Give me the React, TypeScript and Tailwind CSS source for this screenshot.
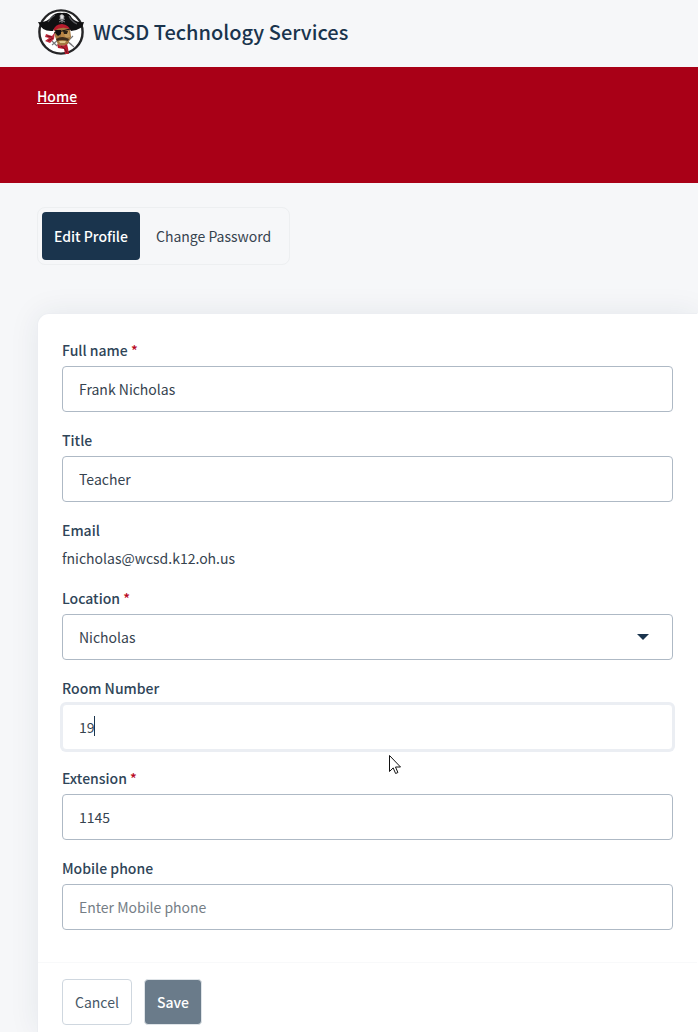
import type { ReactNode } from "react";

const inputClasses =
  "h-[46px] w-full rounded border border-[#aeb9c5] bg-white px-4 text-[14px] text-[#36434f] placeholder:text-[#757e86] focus:border-[#ebeef3] focus:outline-none focus:ring-2 focus:ring-[#ebeef3]";

function Label({ htmlFor, required, children }: { htmlFor: string; required?: boolean; children: ReactNode }) {
  return (
    <label htmlFor={htmlFor} className="text-[14px] leading-6 font-medium text-[#2f4558]">
      {children}
      {required && <span className="text-[#b8071c]"> *</span>}
    </label>
  );
}

type TextFieldProps = {
  id: string;
  label: string;
  value?: string;
  placeholder?: string;
  required?: boolean;
  active?: boolean;
};

function TextField({ id, label, value, placeholder, required, active }: TextFieldProps) {
  return (
    <div className="flex flex-col gap-1">
      <Label htmlFor={id} required={required}>
        {label}
      </Label>
      <div className="relative">
        <input
          id={id}
          type="text"
          defaultValue={value}
          placeholder={placeholder}
          autoFocus={active}
          className={`${inputClasses} ${active ? "caret-transparent" : ""}`}
        />
        {active && <span className="pointer-events-none absolute top-3 left-8 h-5 w-px bg-[#1a344d]" />}
      </div>
    </div>
  );
}

function PirateLogo() {
  return (
    <svg viewBox="0 0 48 48" className="size-12 shrink-0" aria-hidden="true">
      <circle cx="24" cy="24" r="21.6" fill="#fff" stroke="#252527" strokeWidth="2.4" />
      {/* crossed swords */}
      <path d="M15 33 L20 38 M36 28 L29 35 M15 37 L21 32 M35 37 L29 32 M31 34 L37 39" stroke="#77777a" strokeWidth="1.1" />
      {/* face */}
      <path d="M18 21 Q25 17 33 21 L34 29 Q32 33 31 36 Q26 39 21 37 L19 31 Q17 27 18 21Z" fill="#a37840" />
      <path d="M27 23 L32 23 L33 29 L27 30Z" fill="#c49a5b" />
      <path d="M24 24 L27 24 L28 29 L24 29Z" fill="#b98443" />
      <path d="M19 31 Q25 27 32 31 L31 33 Q25 31 20 33Z" fill="#3e2c1c" />
      <path d="M22 33 L29 33 L28 35 L23 35Z" fill="#dec58a" />
      {/* bandana */}
      <path d="M17 23 Q15 18 19 16 Q25 14 32 16 Q35 19 34 22 Q25 17 17 23Z" fill="#b51c2d" />
      <path d="M18 24 L15 28 L9 26 L8 29 L12 30 L8 33 L13 35 L17 31Z" fill="#c02a3c" />
      <path d="M10 28 L15 29 M11 33 L16 30" stroke="#711422" strokeWidth="1" />
      <path d="M20 36 Q25 39 30 36 L31 40 L32 46 L28 46 L27 41 L21 40Z" fill="#b51c2d" />
      <path d="M24 38 L28 41 L30 45" stroke="#6b1421" strokeWidth="1" fill="none" />
      {/* eye patch */}
      <path d="M17 25 L33 21" stroke="#111" strokeWidth="1" />
      <path d="M18 22 L24 22 L24 26 L21 28 L19 26Z" fill="#111" />
      <path d="M26 23 L31 23 L30 26 L27 26Z" fill="#292016" />
      {/* hat */}
      <path d="M1 14 Q10 15 14 9 Q19 4 25 5 Q32 4 35 10 Q39 15 47 14 Q46 22 34 23 Q32 17 25 16 Q18 16 16 23 Q5 24 1 14Z" fill="#101012" />
      <path d="M11 14 Q14 9 18 7 M32 8 Q34 13 40 16" stroke="#57585c" strokeWidth="1.2" fill="none" />
      <path d="M23 7.5 L25 6.5 L27 8 L26.5 11 L23.5 11Z M25 11 V15 M22 11 L28 14 M28 11 L22 14" fill="#dedee0" stroke="#a5a5a8" strokeWidth=".8" />
    </svg>
  );
}

export default function App() {
  return (
    <div className="relative flex min-h-screen flex-col bg-[#f6f7f9] font-['Noto_Sans_CJK_SC',sans-serif] text-[14px] leading-6 text-[#36434f]">
      <header className="flex h-[67px] items-center gap-2 pb-1 pl-[37px]">
        <PirateLogo />
        <span className="text-[20px] leading-7 font-medium text-[#1a344d]">WCSD Technology Services</span>
      </header>

      <nav aria-label="Breadcrumb" className="h-[116px] bg-[#a90017] px-[37px] pt-[17px]">
        <a href="#home" className="font-medium text-white underline">
          Home
        </a>
      </nav>

      <main className="flex flex-1 flex-col pt-6 pl-[37px]">
        <div className="flex gap-0.5 self-start rounded-lg border border-[#edeff1] p-1">
          <button type="button" className="h-12 rounded bg-[#1a344d] px-3 font-medium text-white">
            Edit Profile
          </button>
          <button type="button" className="h-12 rounded px-3.5">
            Change Password
          </button>
        </div>

        <form className="mt-12 flex flex-1 flex-col rounded-tl-xl border border-b-0 border-[#eceef2] border-r-white bg-white shadow-[0_0_30px_rgba(26,52,77,0.08)]">
          <div className="flex flex-col gap-4 px-6 pt-6 pb-8">
            <TextField id="full-name" label="Full name" value="Frank Nicholas" required />
            <TextField id="title" label="Title" value="Teacher" />
            <div className="flex flex-col gap-1">
              <span className="font-medium text-[#2f4558]">Email</span>
              <span>fnicholas@wcsd.k12.oh.us</span>
            </div>
            <div className="flex flex-col gap-1">
              <Label htmlFor="location" required>
                Location
              </Label>
              <div className="relative">
                <select id="location" defaultValue="Nicholas" className={`${inputClasses} appearance-none`}>
                  <option>Nicholas</option>
                </select>
                <svg viewBox="0 0 12 6" className="pointer-events-none absolute top-5 right-6 h-[6px] w-3" aria-hidden="true">
                  <path d="M0 0h12L6 6z" fill="#1a344d" />
                </svg>
              </div>
            </div>
            <TextField id="room" label="Room Number" value="19" active />
            <TextField id="extension" label="Extension" value="1145" required />
            <TextField id="mobile" label="Mobile phone" placeholder="Enter Mobile phone" />
          </div>

          <div className="flex gap-3 border-t border-[#f8f9fa] px-6 pt-4">
            <button type="button" className="h-[46px] rounded border border-[#cfd7df] bg-white px-3 text-[#475867]">
              Cancel
            </button>
            <button type="submit" className="h-[46px] rounded border border-[#dfe4e8] bg-[#6a7b8a] px-3 font-medium text-white">
              Save
            </button>
          </div>
        </form>
      </main>

      {/* mouse pointer */}
      <svg viewBox="0 0 12 19" className="pointer-events-none absolute top-[755px] left-[389px] h-[19px] w-3" aria-hidden="true">
        <path d="M.5.5v16l3.7-3.6 2.4 5.6 2.3-1-2.4-5.5h5z" fill="#fff" stroke="#111" />
      </svg>
    </div>
  );
}
